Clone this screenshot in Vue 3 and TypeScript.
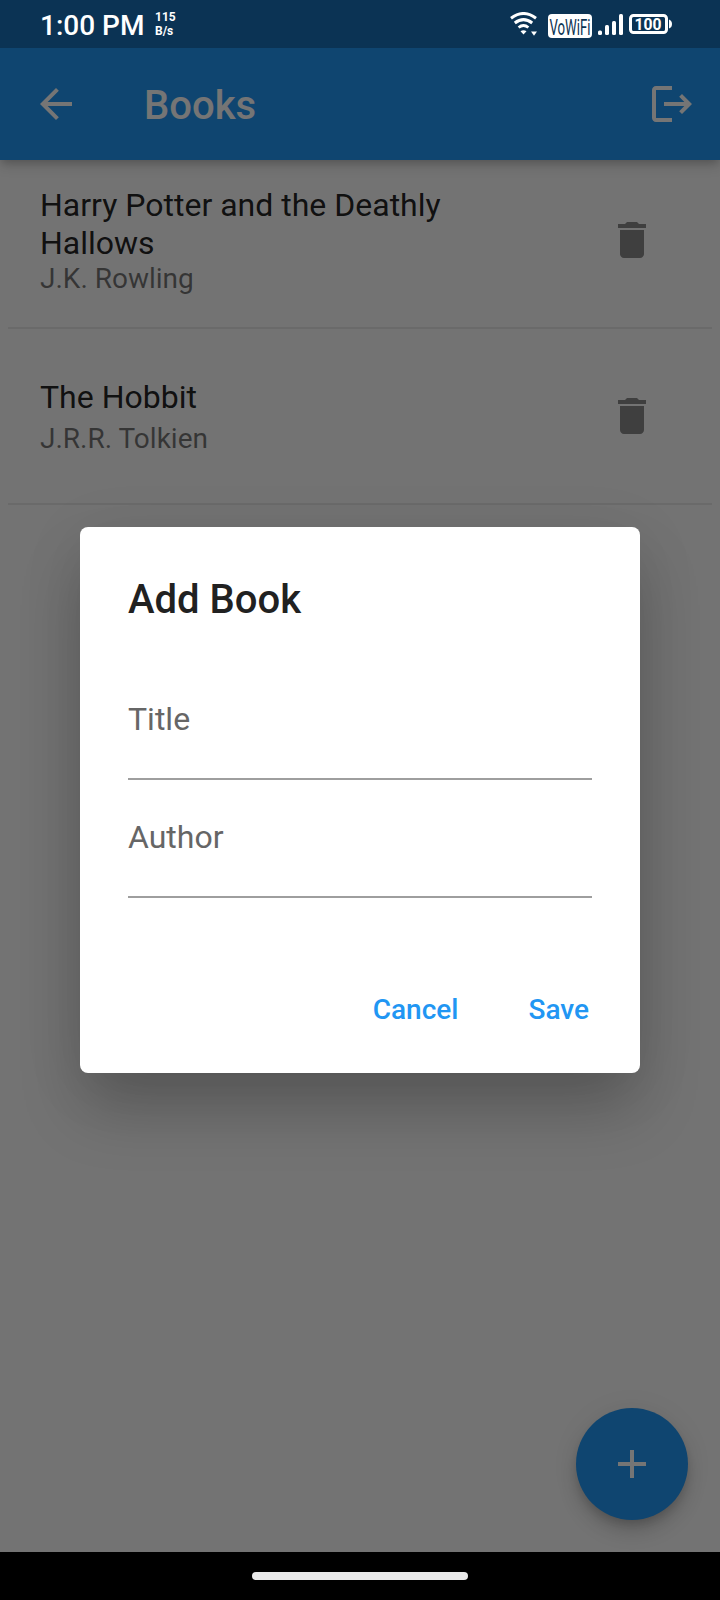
<script setup lang="ts">
interface Book {
  title: string
  author: string
  long?: boolean
}

const books: Book[] = [
  { title: 'Harry Potter and the Deathly Hallows', author: 'J.K. Rowling', long: true },
  { title: 'The Hobbit', author: 'J.R.R. Tolkien' },
]
const fields: string[] = ['Title', 'Author']
</script>

<template>
  <div class="screen">
    <header class="app-bar">
      <svg class="icon" viewBox="0 0 24 24"><path d="M20 11H7.83l5.59-5.59L12 4l-8 8 8 8 1.41-1.41L7.83 13H20v-2z" /></svg>
      <h1 class="heading">Books</h1>
      <svg class="icon" viewBox="0 0 24 24">
        <path d="M17 7l-1.41 1.41L18.17 11H8v2h10.17l-2.58 2.58L17 17l5-5zM4 5h8V3H4c-1.1 0-2 .9-2 2v14c0 1.1.9 2 2 2h8v-2H4V5z" />
      </svg>
    </header>

    <main class="list">
      <article v-for="book in books" :key="book.title" class="row">
        <div class="book" :class="{ long: book.long }">
          <div class="book-title">{{ book.title }}</div>
          <div class="book-author">{{ book.author }}</div>
        </div>
        <svg class="icon trash" viewBox="0 0 24 24">
          <path d="M6 19c0 1.1.9 2 2 2h8c1.1 0 2-.9 2-2V7H6v12zM19 4h-3.500l-1-1h-5l-1 1H5v2h14V4z" />
        </svg>
      </article>
    </main>

    <button class="fab">
      <svg class="icon" viewBox="0 0 24 24"><path d="M19 13h-6v6h-2v-6H5v-2h6V5h2v6h6v2z" /></svg>
    </button>

    <div class="scrim">
      <section class="dialog">
        <h2 class="dialog-title">Add Book</h2>
        <div v-for="field in fields" :key="field" class="field">{{ field }}</div>
        <div class="actions">
          <button class="action">Cancel</button>
          <button class="action">Save</button>
        </div>
      </section>
    </div>

    <div class="status">
      <span class="clock">1:00 PM</span>
      <span class="speed"><span>115</span><span>B/s</span></span>
      <svg class="wifi" viewBox="0 0 28 24" fill="none" stroke="#fff">
        <path d="M1 6.200Q13.500 -3.200 26 6.200" stroke-width="3" />
        <path d="M4.800 11Q13.500 4.200 22.200 11" stroke-width="3" />
        <path d="M8.600 15.500Q13.500 11.500 18.400 15.500" stroke-width="2.800" />
        <path d="M10.500 19.300Q13.500 17.100 16.500 19.300L13.500 22.500z" fill="#fff" stroke="none" />
        <path d="M21 19.500h6l-3 4.200z" fill="#fff" stroke="none" />
      </svg>
      <svg class="vowifi" viewBox="0 0 44 24">
        <rect width="44" height="24" rx="4" fill="#fff" />
        <text x="1.500" y="21" textLength="41" lengthAdjust="spacingAndGlyphs">VoWiFi</text>
      </svg>
      <svg class="signal" viewBox="0 0 26 22" fill="#fff">
        <rect x="0" y="16.500" width="4" height="4.500" rx="1.500" />
        <rect x="7" y="11" width="4" height="10" rx="1.500" />
        <rect x="14" y="7" width="4" height="14" rx="1.500" />
        <rect x="21" y="0" width="4" height="21" rx="1.500" />
      </svg>
      <svg class="battery" viewBox="0 0 44 20">
        <rect x="1.500" y="1.500" width="36" height="17" rx="3" fill="none" stroke="#fff" stroke-width="3" />
        <path d="M40 5.500q3 1 3 4.500t-3 4.500z" fill="#fff" />
        <text x="5.500" y="16" textLength="27" lengthAdjust="spacingAndGlyphs">100</text>
      </svg>
    </div>

    <footer class="nav"><span class="pill"></span></footer>
  </div>
</template>

<style>
html,
body {
  margin: 0;
  background: #000;
}
</style>

<style scoped>
.screen {
  position: relative;
  display: flex;
  flex-direction: column;
  width: 720px;
  height: 1600px;
  overflow: hidden;
  background: #fafafa;
  font-family: Roboto, sans-serif;
}

.icon {
  width: 48px;
  height: 48px;
  flex: none;
  fill: currentColor;
}

.app-bar {
  position: relative;
  z-index: 1;
  box-sizing: border-box;
  display: flex;
  align-items: center;
  height: 160px;
  padding: 48px 24px 0 32px;
  background: #2196f3;
  color: #fff;
  box-shadow: 0 4px 8px -2px rgba(0, 0, 0, 0.16), 0 6px 12px rgba(0, 0, 0, 0.14);
}

.heading {
  flex: 1;
  margin: 0 0 0 64px;
  padding-top: 2px;
  font-size: 40px;
  font-weight: 500;
  line-height: 47px;
}

.list {
  flex: 1;
  margin-top: -7px;
  padding: 0 8px;
}

.row {
  display: flex;
  align-items: center;
  justify-content: space-between;
  height: 174px;
  padding: 0 56px 0 32px;
  border-bottom: 2px solid rgba(0, 0, 0, 0.075);
}

.book {
  display: flex;
  flex-direction: column;
  gap: 6px;
  width: 440px;
  padding-top: 1px;
}

.book.long {
  gap: 0;
}

.book-title {
  font-size: 32px;
  line-height: 38px;
  color: rgba(0, 0, 0, 0.87);
}

.book-author {
  font-size: 28px;
  line-height: 33px;
  color: rgba(0, 0, 0, 0.54);
}

.trash {
  color: #8a8a8a;
}

.fab {
  display: grid;
  place-items: center;
  align-self: flex-end;
  width: 112px;
  height: 112px;
  margin: 0 32px 32px 0;
  padding: 0;
  border: 0;
  border-radius: 50%;
  background: #2196f3;
  color: #fff;
  box-shadow: 0 6px 10px -2px rgba(0, 0, 0, 0.16), 0 12px 20px rgba(0, 0, 0, 0.14), 0 2px 30px rgba(0, 0, 0, 0.06);
}

.scrim {
  position: absolute;
  z-index: 2;
  inset: 0 0 48px;
  display: grid;
  place-items: center;
  padding-top: 48px;
  background: rgba(0, 0, 0, 0.54);
}

.dialog {
  box-sizing: border-box;
  width: 560px;
  height: 546px;
  padding: 49px 48px 0;
  border-radius: 8px;
  background: #fff;
  box-shadow: 0 38px 64px -4px rgba(0, 0, 0, 0.22), 0 10px 64px rgba(0, 0, 0, 0.08);
}

.dialog-title {
  margin: 0 0 62px;
  font-size: 40px;
  font-weight: 500;
  line-height: 47px;
  color: #212121;
}

.field {
  box-sizing: border-box;
  height: 95px;
  margin-bottom: 23px;
  padding-top: 15px;
  border-bottom: 2px solid #9e9e9e;
  font-size: 32px;
  line-height: 38px;
  color: #666;
}

.actions {
  display: flex;
  justify-content: flex-end;
  gap: 70px;
  margin-top: 95px;
  padding-right: 3px;
}

.action {
  padding: 0;
  border: 0;
  background: none;
  font: 500 28px/33px Roboto, sans-serif;
  color: #2196f3;
}

.status {
  position: absolute;
  z-index: 3;
  inset: 0 0 auto;
  box-sizing: border-box;
  display: flex;
  align-items: flex-start;
  height: 48px;
  padding-left: 40px;
  background: rgba(0, 0, 0, 0.25);
  color: #fff;
}

.clock {
  width: 104px;
  margin-top: 9px;
  font-size: 28px;
  font-weight: 500;
  line-height: 33px;
  white-space: nowrap;
}

.speed {
  display: flex;
  flex-direction: column;
  flex: 1;
  margin: 10px 0 0 11px;
  font-size: 12px;
  font-weight: 700;
  line-height: 14px;
}

.wifi {
  width: 28px;
  height: 24px;
  margin: 12px 10px 0 0;
}

.vowifi {
  width: 44px;
  height: 24px;
  margin: 14px 6px 0 0;
  overflow: visible;
  font: 400 22px Roboto, sans-serif;
  fill: #0c3353;
}

.signal {
  width: 26px;
  height: 22px;
  margin: 14px 5px 0 0;
}

.battery {
  width: 44px;
  height: 20px;
  margin: 14px 47px 0 0;
  font: 700 17px Roboto, sans-serif;
  fill: #fff;
}

.nav {
  position: relative;
  z-index: 3;
  flex: none;
  display: grid;
  place-items: center;
  height: 48px;
  background: #000;
}

.pill {
  width: 216px;
  height: 8px;
  border-radius: 4px;
  background: #eaeaea;
}
</style>
